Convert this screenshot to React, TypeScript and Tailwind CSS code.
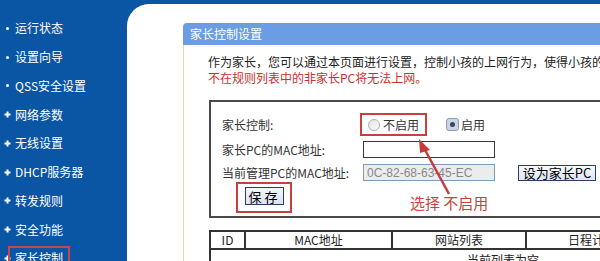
import React from 'react';

const font = { fontFamily: '"Noto Sans CJK SC", "Liberation Sans", sans-serif' };

const menu = [
  { label: '运行状态', dot: true },
  { label: '设置向导', dot: true },
  { label: 'QSS安全设置', dot: true },
  { label: '网络参数', dot: false },
  { label: '无线设置', dot: false },
  { label: 'DHCP服务器', dot: false },
  { label: '转发规则', dot: false },
  { label: '安全功能', dot: false },
  { label: '家长控制', dot: false, active: true },
];

function Bullet({ dot }: { dot: boolean }) {
  if (dot) return <span className="w-[3px] h-[3px] rounded-full bg-white" />;
  return (
    <svg width="7" height="7" viewBox="0 0 7 7">
      <path d="M3.5 0.5v6M0.5 3.5h6" stroke="#fff" strokeWidth="2" />
    </svg>
  );
}

function Sidebar() {
  return (
    <div className="w-[127px] shrink-0 pt-[14px] text-white text-[12px]">
      {menu.map((m) => (
        <div key={m.label} className="h-[28.75px] flex items-center">
          <div className="w-[15px] flex justify-center">
            <Bullet dot={m.dot} />
          </div>
          {m.active ? (
            <span className="-ml-[7px] border-2 border-[#c24a4a] px-[5px] h-[24px] flex items-center">{m.label}</span>
          ) : (
            <span>{m.label}</span>
          )}
        </div>
      ))}
    </div>
  );
}

function Radio({ checked }: { checked?: boolean }) {
  if (checked) {
    return (
      <span className="w-[13px] h-[13px] rounded-[3px] border border-[#8a9cb8] bg-[#c9d5e6] flex items-center justify-center">
        <span className="w-[5px] h-[5px] rounded-full bg-[#3c4552]" />
      </span>
    );
  }
  return <span className="w-[12px] h-[12px] rounded-full border border-[#b0b0b0] bg-gradient-to-br from-[#e6e6e6] to-[#fafafa]" />;
}

function Settings() {
  return (
    <div className="ml-[1px] w-[600px] h-[118px] border-2 border-[#4a4a4a] pl-[11px] text-[12px] text-[#333]">
      <div className="mt-[11px] h-[23px] flex items-center">
        <span className="w-[138px]">家长控制:</span>
        <div className="h-[23px] w-[67px] border-2 border-[#c8403f] flex items-center pl-[6px] gap-[3px]">
          <Radio />
          <span>不启用</span>
        </div>
        <div className="ml-[19px] flex items-center gap-[2px]">
          <Radio checked />
          <span>启用</span>
        </div>
      </div>
      <div className="mt-[5px] h-[17px] flex items-center">
        <span className="w-[141px]">家长PC的MAC地址:</span>
        <div className="w-[132px] h-[17px] border border-[#3a3a3a] bg-white" />
      </div>
      <div className="mt-[6px] h-[17px] flex items-center">
        <span className="w-[141px]">当前管理PC的MAC地址:</span>
        <div className="w-[132px] h-[17px] border border-[#7f9db9] bg-[#ececec] pl-[3px] flex items-center text-[#888] text-[12px]" style={{ fontFamily: '"Liberation Sans", sans-serif' }}>
          0C-82-68-63-45-EC
        </div>
        <button className="ml-[23px] w-[78px] h-[16px] border border-[#2a3f66] bg-gradient-to-b from-[#f7f9fd] to-[#dfe6f2] text-[13px] text-black flex items-center justify-center leading-none">
          设为家长PC
        </button>
      </div>
      <div className="mt-[1px] ml-[14px] w-[56px] h-[31px] border-2 border-[#c8403f] pl-[7px] pt-[3px]">
        <button className="w-[39px] h-[18px] border border-[#2a3f66] bg-gradient-to-b from-[#f4f7fc] to-[#dbe3f0] text-[13px] text-black flex items-center justify-center leading-none tracking-[3px]">
          保存
        </button>
      </div>
    </div>
  );
}

function RuleTable() {
  return (
    <div className="mt-[12px] ml-[1px] w-[588px] border-2 border-[#333] text-[12px] text-[#222]">
      <div className="h-[18px] flex border-b-2 border-[#333]">
        <div className="w-[35px] flex items-center justify-center border-r-2 border-[#333]">ID</div>
        <div className="w-[147px] flex items-center justify-center border-r-2 border-[#333]">MAC地址</div>
        <div className="w-[134px] flex items-center justify-center border-r-2 border-[#333]">网站列表</div>
        <div className="flex-1 flex items-center pl-[41px]">日程计划</div>
      </div>
      <div className="h-[20px] flex items-center justify-center">当前列表为空</div>
    </div>
  );
}

export default function App() {
  return (
    <div className="relative w-[600px] h-[261px] bg-[#0b55a5] flex overflow-hidden" style={font}>
      <Sidebar />
      <div className="flex-1 mt-[4px] bg-white rounded-tl-[22px] pl-[56px] pt-[19px] overflow-hidden">
        <div className="w-[560px]">
          <div className="h-[22px] rounded-t-[4px] bg-[#6b9de2] text-white text-[12px] flex items-center pl-[7px]">
            家长控制设置
          </div>
          <div className="border-l border-[#f2d3a6] pl-[24px] pt-[9px] h-[300px]">
            <p className="text-[12px] leading-[16px] text-[#222] whitespace-nowrap">
              作为家长，您可以通过本页面进行设置，控制小孩的上网行为，使得小孩的PC只能在
            </p>
            <p className="text-[12px] leading-[16px] text-[#cc2f2f] whitespace-nowrap">
              不在规则列表中的非家长PC将无法上网。
            </p>
            <div className="mt-[14px]">
              <Settings />
            </div>
            <RuleTable />
          </div>
        </div>
      </div>
      <svg className="absolute left-0 top-0 pointer-events-none" width="600" height="261">
        <line x1="449" y1="194" x2="424" y2="148" stroke="#c43c3c" strokeWidth="2.5" />
        <path d="M419 139 L430 150 L420 153 Z" fill="#c43c3c" />
      </svg>
      <span className="absolute left-[410px] top-[194px] text-[15px] leading-[18px] text-[#c9413b] whitespace-nowrap">
        选择 不启用
      </span>
    </div>
  );
}
